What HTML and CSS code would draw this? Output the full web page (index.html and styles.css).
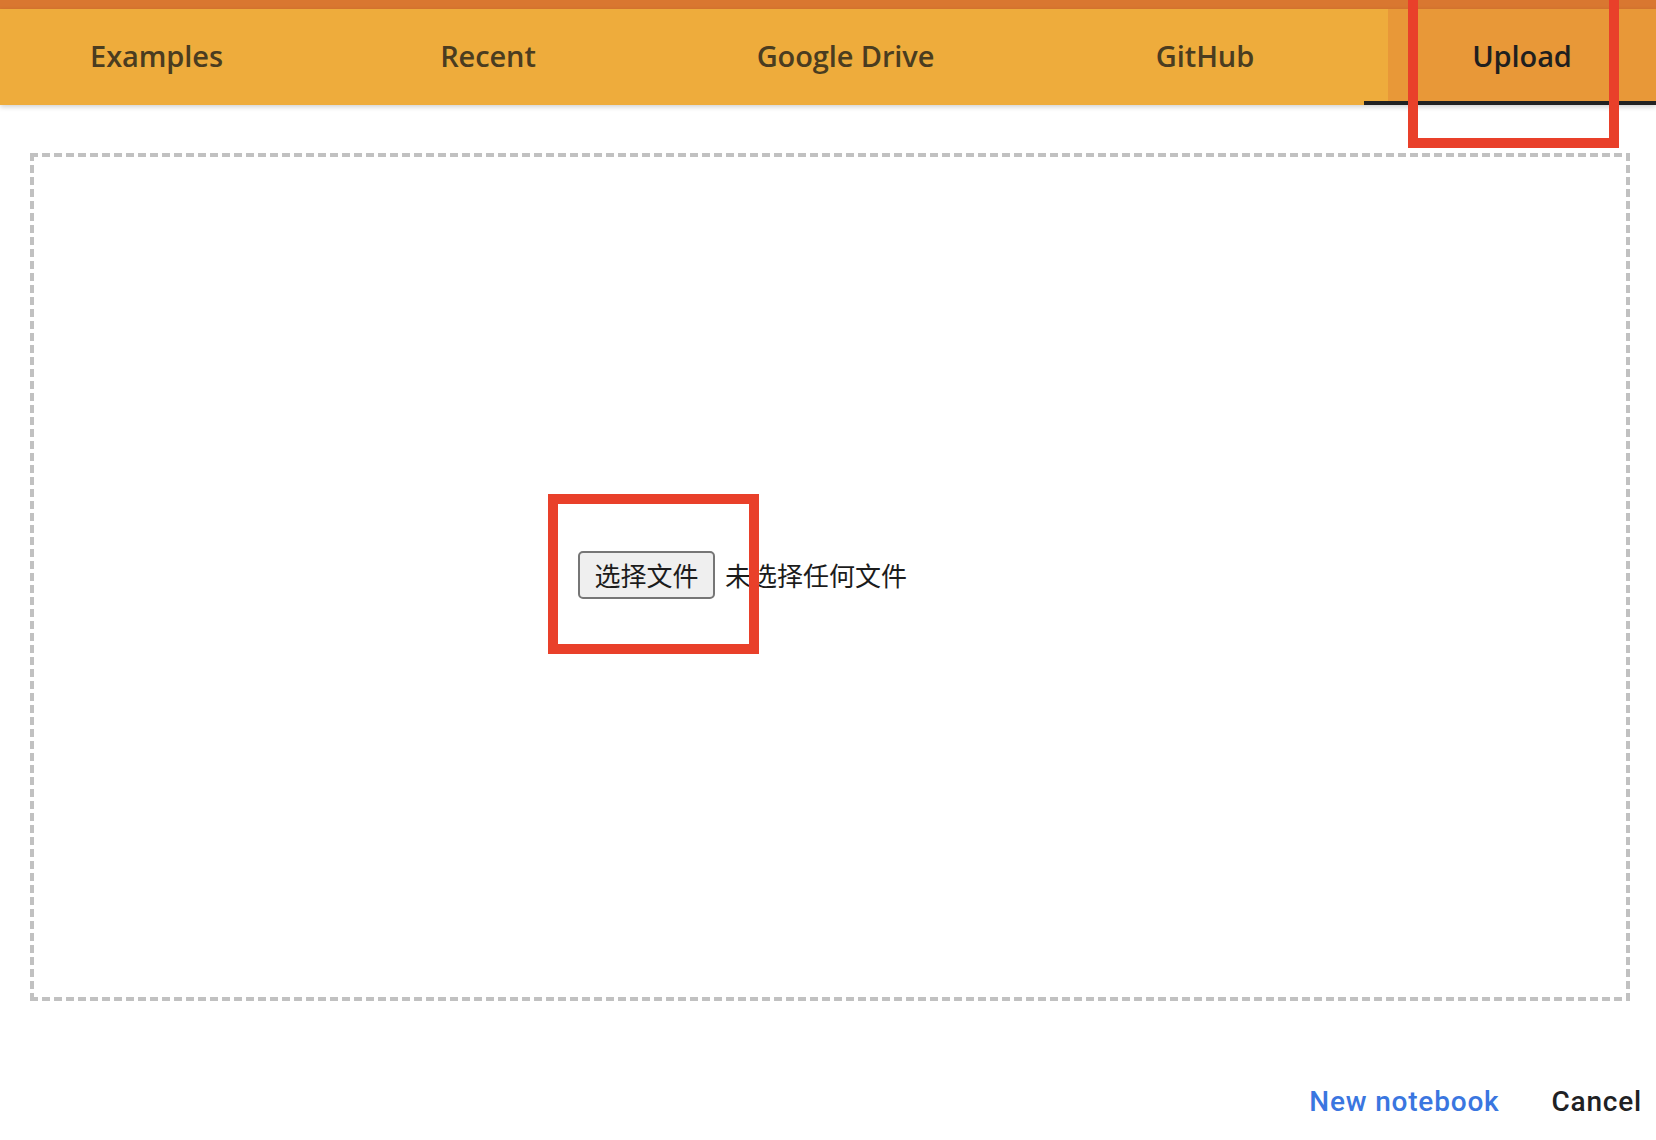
FILE: index.html
```html
<!DOCTYPE html>
<html lang="zh-CN">
<head>
<meta charset="utf-8">
<title>Open notebook - Upload</title>
<link rel="stylesheet" href="styles.css">
</head>
<body>
<div class="dialog">
  <div class="stripe"></div>
  <header class="tabbar">
    <nav class="tabs">
      <div class="tab tab-examples">Examples</div>
      <div class="tab tab-recent">Recent</div>
      <div class="tab tab-drive">Google Drive</div>
      <div class="tab tab-github">GitHub</div>
      <div class="tab tab-upload is-selected"><span class="tab-label">Upload</span></div>
    </nav>
  </header>
  <main class="content">
    <div class="dropzone">
      <div class="file-input">
        <span class="file-button">选择文件</span>
        <span class="file-status">未选择任何文件</span>
      </div>
    </div>
  </main>
  <footer class="actions">
    <span class="action action-primary">New notebook</span>
    <span class="action action-cancel">Cancel</span>
  </footer>
  <div class="mark mark-tab"></div>
  <div class="mark mark-button"></div>
</div>
</body>
</html>
```
FILE: styles.css
```css
html, body {
  margin: 0;
  padding: 0;
  background: #ffffff;
}

.dialog {
  position: relative;
  width: 1656px;
  height: 1140px;
  overflow: hidden;
  font-family: "Open Sans", "Noto Sans", sans-serif;
}

.stripe {
  height: 9px;
  background: #d97730;
}

.tabbar {
  position: relative;
  height: 96px;
  background: #eeac3c;
  overflow: hidden;
  box-shadow: 0 2px 5px rgba(0, 0, 0, 0.18);
  z-index: 1;
}

.tabs {
  display: flex;
  height: 100%;
  margin-left: -18px;
}

.tab {
  position: relative;
  flex: none;
  display: flex;
  align-items: center;
  justify-content: center;
  padding-bottom: 4px;
  box-sizing: border-box;
  font-size: 29px;
  font-weight: 600;
  color: #4a3c20;
  letter-spacing: -0.1px;
}

.tab-examples { width: 349px; }
.tab-recent { width: 314px; }
.tab-drive { width: 401px; }
.tab-github { width: 318px; }
.tab-upload { width: 316px; }

.tab.is-selected {
  color: #1f1f1f;
  border-bottom: 4px solid #222222;
  padding-bottom: 0;
}

.tab.is-selected::before {
  content: "";
  position: absolute;
  left: 24px;
  right: 0;
  top: 0;
  bottom: 0;
  background: #e89838;
}

.tab-label {
  position: relative;
}

.content {
  padding: 48px 26px 0 30px;
}

.dropzone {
  height: 848px;
  box-sizing: border-box;
  padding-left: 548px;
  display: flex;
  align-items: center;
  background:
    repeating-linear-gradient(90deg, #c1c1c1 0 8px, transparent 8px 12px) left top / 100% 4px no-repeat,
    repeating-linear-gradient(90deg, #c1c1c1 0 8px, transparent 8px 12px) left bottom / 100% 4px no-repeat,
    repeating-linear-gradient(180deg, #c1c1c1 0 8px, transparent 8px 12px) left top / 4px 100% no-repeat,
    repeating-linear-gradient(180deg, #c1c1c1 0 8px, transparent 8px 12px) right top / 4px 100% no-repeat;
}

.file-input {
  display: flex;
  align-items: center;
  gap: 10px;
  margin-top: -5px;
  font-family: "Noto Sans CJK SC", "Noto Sans", sans-serif;
  font-size: 26px;
  color: #1c1c1c;
}

.file-button {
  display: flex;
  align-items: center;
  justify-content: center;
  width: 137px;
  height: 48px;
  box-sizing: border-box;
  border: 2px solid #767676;
  border-radius: 5px;
  background: #efefef;
  line-height: 1;
}

.file-status {
  line-height: 1;
}

.actions {
  display: flex;
  justify-content: flex-end;
  align-items: center;
  gap: 52px;
  padding: 84px 14px 0 0;
  font-family: "Roboto", "Liberation Sans", sans-serif;
  font-size: 28px;
  font-weight: 500;
  letter-spacing: 0.8px;
}

.action-primary {
  color: #3a76e0;
}

.action-cancel {
  color: #202124;
}

.mark {
  position: absolute;
  border: 10px solid #e9402a;
  box-sizing: border-box;
  z-index: 2;
}

.mark-tab {
  left: 1408px;
  top: -20px;
  width: 211px;
  height: 168px;
}

.mark-button {
  left: 548px;
  top: 494px;
  width: 211px;
  height: 160px;
}
```
